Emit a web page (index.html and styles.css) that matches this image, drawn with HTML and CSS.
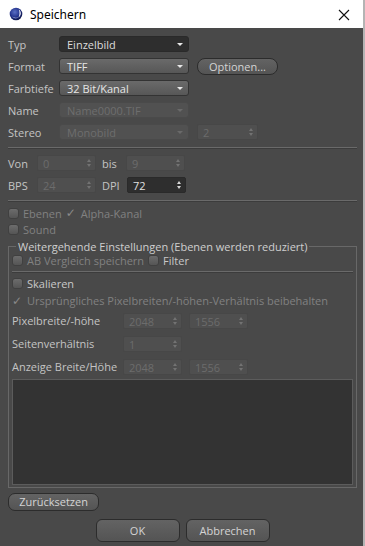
FILE: index.html
```html
<!DOCTYPE html>
<html lang="de">
<head>
  <meta charset="UTF-8">
  <title>Speichern</title>
  <link rel="stylesheet" href="styles.css">
</head>
<body>

  <div class="window">
    <div class="titlebar">
      <svg class="app-icon" width="14" height="14" viewBox="0 0 14 14">
        <defs>
          <radialGradient id="ball" cx="0.4" cy="0.35" r="0.7">
            <stop offset="0" stop-color="#5a6fc4"/>
            <stop offset="0.6" stop-color="#22318a"/>
            <stop offset="1" stop-color="#0c1440"/>
          </radialGradient>
        </defs>
        <circle cx="7" cy="7" r="6.3" fill="url(#ball)"/>
        <path d="M9.8 2.6 C12.6 4.4 12.4 9 9.4 10.6 C10.8 8.4 10.9 5 9.8 2.6 Z" fill="#ffffff"/>
        <path d="M3 9.5 C4.6 11.4 7.6 11.8 9.4 10.6 C7.2 11 4.8 10.6 3 9.5 Z" fill="#c8d2f0"/>
      </svg>
      <span class="title">Speichern</span>
      <svg class="close" width="12" height="12" viewBox="0 0 12 12">
        <path d="M1 1 L11 11 M11 1 L1 11" stroke="#111" stroke-width="1.1"/>
      </svg>
    </div>

    <div class="dialog">
      <div class="row">
        <span class="lbl">Typ</span>
        <div class="select dark">Einzelbild<i class="arrow"></i></div>
      </div>
      <div class="row">
        <span class="lbl">Format</span>
        <div class="select">TIFF<i class="arrow"></i></div>
        <div class="btn pill">Optionen...</div>
      </div>
      <div class="row">
        <span class="lbl">Farbtiefe</span>
        <div class="select">32 Bit/Kanal<i class="arrow"></i></div>
      </div>
      <div class="row">
        <span class="lbl">Name</span>
        <div class="select off">Name0000.TIF<i class="arrow"></i></div>
      </div>
      <div class="row">
        <span class="lbl">Stereo</span>
        <div class="select off">Monobild<i class="arrow"></i></div>
        <div class="num off stereo-num">2<i class="spin"></i></div>
      </div>

      <div class="sep"></div>

      <div class="row">
        <span class="lbl short">Von</span>
        <div class="num off">0<i class="spin"></i></div>
        <span class="lbl mid">bis</span>
        <div class="num off">9<i class="spin"></i></div>
      </div>
      <div class="row">
        <span class="lbl short">BPS</span>
        <div class="num off">24<i class="spin"></i></div>
        <span class="lbl mid">DPI</span>
        <div class="num dark">72<i class="spin"></i></div>
      </div>

      <div class="sep"></div>

      <div class="check-row">
        <span class="box"></span><span class="muted">Ebenen</span>
        <span class="tick">&#10003;</span><span class="muted">Alpha-Kanal</span>
      </div>
      <div class="check-row">
        <span class="box"></span><span class="muted">Sound</span>
      </div>

      <fieldset class="group">
        <legend>Weitergehende Einstellungen (Ebenen werden reduziert)</legend>
        <div class="check-row first">
          <span class="box"></span><span class="muted">AB Vergleich speichern</span>
          <span class="box"></span><span>Filter</span>
        </div>
        <div class="sep inner"></div>
        <div class="check-row tall">
          <span class="box"></span><span>Skalieren</span>
        </div>
        <div class="check-row tall">
          <span class="tick">&#10003;</span><span class="muted">Ursprüngliches Pixelbreiten/-höhen-Verhältnis beibehalten</span>
        </div>
        <div class="row wide">
          <span class="lbl long">Pixelbreite/-höhe</span>
          <div class="num off">2048<i class="spin"></i></div>
          <div class="num off">1556<i class="spin"></i></div>
        </div>
        <div class="row wide">
          <span class="lbl long">Seitenverhältnis</span>
          <div class="num off">1<i class="spin"></i></div>
        </div>
        <div class="row wide">
          <span class="lbl long">Anzeige Breite/Höhe</span>
          <div class="num off">2048<i class="spin"></i></div>
          <div class="num off">1556<i class="spin"></i></div>
        </div>
        <div class="preview"></div>
      </fieldset>

      <div class="btn reset">Zurücksetzen</div>

      <div class="actions">
        <div class="btn big">OK</div>
        <div class="btn big">Abbrechen</div>
      </div>
    </div>
  </div>

</body>
</html>
```

FILE: styles.css
```css
body {
  margin: 0;
  font-family: "Open Sans", "Noto Sans", sans-serif;
  font-size: 11px;
  background-color: #494949;
}

.window {
  width: 363px;
  height: 546px;
  border-right: 2px solid #b4b4b4;
  background-color: #494949;
  color: #c4c4c4;
}

.titlebar {
  height: 28px;
  background-color: #ffffff;
  display: flex;
  align-items: center;
  padding-left: 9px;
  padding-right: 13px;
}

.app-icon {
  margin-right: 7px;
}

.title {
  flex: 1;
  color: #000;
  font-family: "Noto Sans", sans-serif;
  font-size: 12px;
}

.close {
  margin-top: 1px;
}

.dialog {
  padding: 5px 6px 0 8px;
}

.row {
  display: flex;
  align-items: center;
  height: 22px;
  gap: 8px;
  white-space: nowrap;
}

.lbl {
  width: 43px;
  flex-shrink: 0;
}

.lbl.short {
  width: 21px;
}

.lbl.mid {
  width: 16px;
  margin-left: -2px;
}

.lbl.long {
  width: 104px;
}

.select {
  position: relative;
  width: 130px;
  height: 16px;
  box-sizing: border-box;
  padding-left: 7px;
  line-height: 15px;
  border-radius: 3px;
  border: 1px solid #333;
  background: linear-gradient(#6a6a6a, #575757);
  color: #e6e6e6;
}

.select.dark {
  background: #2e2e2e;
  border-color: #2a2a2a;
  color: #dcdcdc;
}

.select.off {
  background: #515151;
  border-color: #4a4a4a;
  color: #6e6e6e;
}

.arrow {
  position: absolute;
  right: 5px;
  top: 6px;
  width: 0;
  height: 0;
  border-left: 3px solid transparent;
  border-right: 3px solid transparent;
  border-top: 3px solid #e8e8e8;
}

.select.off .arrow {
  border-top-color: #6a6a6a;
}

.num {
  position: relative;
  width: 59px;
  height: 16px;
  flex-shrink: 0;
  box-sizing: border-box;
  padding-left: 5px;
  line-height: 15px;
  border-radius: 2px;
  border: 1px solid #474747;
  background: #4f4f4f;
  color: #6c6c6c;
}

.num.dark {
  background: #2e2e2e;
  border-color: #2a2a2a;
  color: #e0e0e0;
  margin-left: 1px;
}

.stereo-num {
  width: 61px;
}

.spin {
  position: absolute;
  right: 4px;
  top: 3px;
  width: 0;
  height: 0;
  border-left: 2px solid transparent;
  border-right: 2px solid transparent;
  border-bottom: 3px solid #737373;
}

.spin::after {
  content: "";
  position: absolute;
  left: -2px;
  top: 5px;
  border-left: 2px solid transparent;
  border-right: 2px solid transparent;
  border-top: 3px solid #737373;
}

.num.dark .spin {
  border-bottom-color: #d8d8d8;
}

.num.dark .spin::after {
  border-top-color: #d8d8d8;
}

.btn {
  box-sizing: border-box;
  text-align: center;
  border: 1px solid #2c2c2c;
  background: linear-gradient(#636363, #545454);
  color: #d4d4d4;
}

.btn.pill {
  width: 81px;
  height: 17px;
  line-height: 15px;
  border-radius: 8px;
  margin-top: 1px;
}

.sep {
  height: 1px;
  margin: 4px 0 3px;
  background: #6a6a6a;
  border-bottom: 1px solid #3c3c3c;
}

.sep.inner {
  margin: 3px 0 2px;
}

.check-row {
  display: flex;
  align-items: center;
  height: 16px;
  color: #c8c8c8;
  white-space: nowrap;
}

.check-row.first {
  margin-top: -1px;
}

.check-row.tall {
  height: 17px;
}

.box {
  width: 11px;
  height: 11px;
  border-radius: 3px;
  background: linear-gradient(#6c6c6c, #555);
  border: 1px solid #404040;
  box-sizing: border-box;
  margin-right: 4px;
}

.muted {
  color: #818181;
  margin-right: 4px;
}

.tick {
  width: 11px;
  margin-right: 4px;
  color: #8a8a8a;
  font-family: "DejaVu Sans", sans-serif;
  font-size: 12px;
  font-style: italic;
}

.group {
  margin: 3px 0 0;
  padding: 0 3px 2px 3px;
  border: 1px solid #686868;
  width: 349px;
  box-sizing: border-box;
  min-width: 0;
}

.group legend {
  padding: 0 2px;
  margin-left: 4px;
  color: #cfcfcf;
  line-height: 13px;
}

.row.wide {
  gap: 7px;
  height: 23px;
}

.preview {
  height: 104px;
  margin-top: 1px;
  background: #333333;
  border: 1px solid #5c5c5c;
}

.btn.reset {
  width: 91px;
  height: 18px;
  line-height: 16px;
  border-radius: 7px;
  margin-top: 5px;
}

.actions {
  display: flex;
  justify-content: center;
  gap: 6px;
  margin-top: 8px;
}

.btn.big {
  width: 84px;
  height: 23px;
  line-height: 21px;
  border-radius: 6px;
}
```
